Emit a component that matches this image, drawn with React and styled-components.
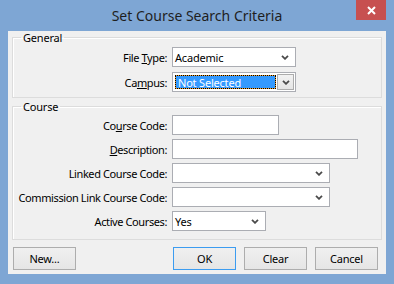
import React from "react";
import styled, { createGlobalStyle } from "styled-components";

const GlobalStyle = createGlobalStyle`
  html, body {
    margin: 0;
    padding: 0;
  }
  body {
    font-family: "Noto Sans", "Open Sans", sans-serif;
    font-size: 11px;
    letter-spacing: -0.2px;
    color: #000;
  }
`;

const Window = styled.div`
  width: 394px;
  height: 284px;
  box-sizing: border-box;
  padding: 0 8px;
  background: #7ea6d4;
  overflow: hidden;
`;

const TitleBar = styled.div`
  height: 31px;
  display: grid;
  grid-template-columns: 1fr auto 1fr;
  align-items: center;
`;

const Title = styled.div`
  grid-column: 2;
  font-size: 14px;
  letter-spacing: 0;
  color: #1e1e1e;
  white-space: nowrap;
`;

const CloseButton = styled.div`
  grid-column: 3;
  justify-self: end;
  align-self: start;
  width: 30px;
  height: 20px;
  background: #c75050;
  display: flex;
  align-items: center;
  justify-content: center;
`;

const Client = styled.div`
  height: 243px;
  box-sizing: border-box;
  padding: 0 4px;
  background: #f0f0f0;
`;

const Group = styled.fieldset`
  margin: ${(p) => p.$top}px 0 0 0;
  padding: ${(p) => p.$pt}px 0 ${(p) => p.$pb}px 0;
  border: 1px solid #dcdcdc;
  box-shadow: inset 1px 1px 0 #fff;
  display: flex;
  flex-direction: column;
  gap: ${(p) => p.$gap}px;
  min-width: 0;
`;

const Legend = styled.legend`
  margin-left: 8px;
  padding: 0 2px;
  line-height: 13px;
`;

const Row = styled.div`
  display: grid;
  grid-template-columns: 154px auto;
  column-gap: 5px;
  align-items: center;
  height: 20px;
`;

const Label = styled.label`
  text-align: right;
  white-space: nowrap;
  letter-spacing: -0.4px;
`;

const TextBox = styled.div`
  width: ${(p) => p.$w}px;
  height: 20px;
  box-sizing: border-box;
  border: 1px solid #abadb3;
  background: #fff;
`;

const Combo = styled.div`
  width: ${(p) => p.$w}px;
  height: 20px;
  box-sizing: border-box;
  border: 1px solid #abadb3;
  background: #fff;
  display: flex;
  align-items: center;
  padding: 0 6px 0 2px;
`;

const ComboText = styled.span`
  flex: 1;
  white-space: nowrap;
`;

const FocusCombo = styled.div`
  width: ${(p) => p.$w}px;
  height: 20px;
  box-sizing: border-box;
  border: 1px solid #abadb3;
  background: #fff;
  display: flex;
  align-items: stretch;
  padding: 1px;
  gap: 1px;
`;

const Highlight = styled.div`
  flex: 1;
  margin: 1px 0 1px 1px;
  border: 1px dotted #000;
  background: linear-gradient(#3399ff, #3399ff) padding-box,
    linear-gradient(#f0a030, #f0a030) border-box;
  color: #fff;
  display: flex;
  align-items: center;
  padding-left: 2px;
  white-space: nowrap;
`;

const DropButton = styled.div`
  width: 17px;
  box-sizing: border-box;
  border: 1px solid #acacac;
  background: linear-gradient(#f2f2f2, #e5e5e5);
  display: flex;
  align-items: center;
  justify-content: center;
`;

const ButtonRow = styled.div`
  display: flex;
  gap: 8px;
  margin-top: 7px;
  padding: 0 4px 0 1px;
`;

const Button = styled.div`
  width: 63px;
  height: 23px;
  box-sizing: border-box;
  border: 1px solid ${(p) => (p.$default ? "#3c9cf0" : "#adadad")};
  background: linear-gradient(#f0f0f0, #e5e5e5);
  display: flex;
  align-items: center;
  justify-content: center;
  margin-left: ${(p) => (p.$push ? "auto" : "0")};
`;

const Chevron = () => (
  <svg width="8" height="5" viewBox="0 0 8 5">
    <polyline points="1,0.8 4,3.8 7,0.8" fill="none" stroke="#4a4a4a" strokeWidth="1.8" />
  </svg>
);

const Cross = () => (
  <svg width="9" height="9" viewBox="0 0 9 9">
    <path d="M1 1 L8 8 M8 1 L1 8" stroke="#fff" strokeWidth="2" />
  </svg>
);

function App() {
  return (
    <>
      <GlobalStyle />
      <Window>
        <TitleBar>
          <Title>Set Course Search Criteria</Title>
          <CloseButton>
            <Cross />
          </CloseButton>
        </TitleBar>
        <Client>
          <Group $top={0} $pt={3} $pb={5} $gap={5}>
            <Legend>General</Legend>
            <Row>
              <Label>
                File <u>T</u>ype:
              </Label>
              <Combo $w={124}>
                <ComboText>Academic</ComboText>
                <Chevron />
              </Combo>
            </Row>
            <Row>
              <Label>
                Ca<u>m</u>pus:
              </Label>
              <FocusCombo $w={124}>
                <Highlight>Not Selected</Highlight>
                <DropButton>
                  <Chevron />
                </DropButton>
              </FocusCombo>
            </Row>
          </Group>
          <Group $top={2} $pt={2} $pb={8} $gap={4}>
            <Legend>Course</Legend>
            <Row>
              <Label>
                Co<u>u</u>rse Code:
              </Label>
              <TextBox $w={107} />
            </Row>
            <Row>
              <Label>
                <u>D</u>escription:
              </Label>
              <TextBox $w={186} />
            </Row>
            <Row>
              <Label>Linked Course Code:</Label>
              <Combo $w={158}>
                <ComboText />
                <Chevron />
              </Combo>
            </Row>
            <Row>
              <Label>Commission Link Course Code:</Label>
              <Combo $w={158}>
                <ComboText />
                <Chevron />
              </Combo>
            </Row>
            <Row>
              <Label>Active Courses:</Label>
              <Combo $w={94}>
                <ComboText>Yes</ComboText>
                <Chevron />
              </Combo>
            </Row>
          </Group>
          <ButtonRow>
            <Button>New...</Button>
            <Button $push $default>
              OK
            </Button>
            <Button>Clear</Button>
            <Button>Cancel</Button>
          </ButtonRow>
        </Client>
      </Window>
    </>
  );
}

export default App;
